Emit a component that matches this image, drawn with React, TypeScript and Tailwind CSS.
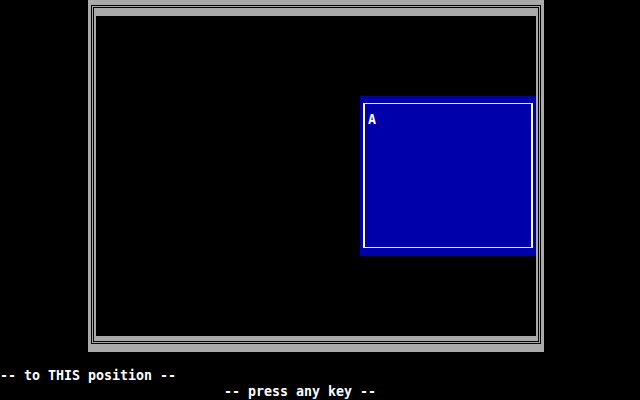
import React from "react";

const font = "font-['DejaVu_Sans_Mono','Liberation_Mono',monospace] font-bold text-[13.29px] leading-[16px] text-white whitespace-pre";

export default function App() {
  return (
    <div className="w-[640px] h-[400px] bg-black flex flex-col overflow-hidden">
      {/* rows 0-21: framed area */}
      <div className="h-[352px] flex flex-row">
        <div className="w-[88px] shrink-0" />
        {/* outer gray frame */}
        <div className="w-[456px] h-[352px] bg-[#aaaaaa] pt-[5px] pl-[3px] pr-[3px] pb-[8px] flex">
          <div className="flex-1 border border-black bg-[#aaaaaa] p-[1px] flex">
            <div className="flex-1 border border-black bg-[#aaaaaa] pt-[8px] pl-[2px] pr-[2px] pb-[5px] flex">
              {/* interior */}
              <div className="w-[440px] h-[320px] bg-black flex flex-col items-end pt-[80px]">
                {/* blue window */}
                <div className="w-[176px] h-[160px] bg-[#0000aa] pt-[7px] pl-[3px] pr-[3px] pb-[8px] flex">
                  <div className="flex-1 border-x-2 border-y border-white pt-[8px] pl-[3px]">
                    <div className={font}>A</div>
                  </div>
                </div>
              </div>
            </div>
          </div>
        </div>
      </div>
      {/* row 22 blank */}
      <div className="h-[16px]" />
      {/* row 23 */}
      <div className={`h-[16px] ${font}`}>-- to THIS position --</div>
      {/* row 24 */}
      <div className={`h-[16px] pl-[224px] ${font}`}>-- press any key --</div>
    </div>
  );
}
